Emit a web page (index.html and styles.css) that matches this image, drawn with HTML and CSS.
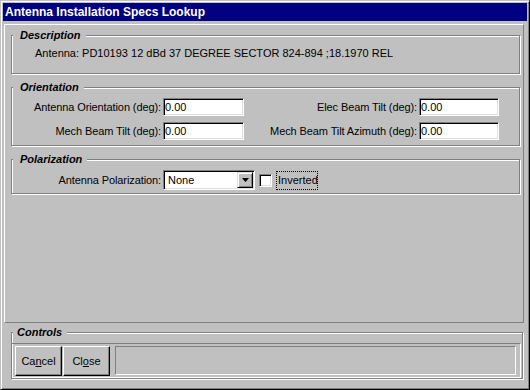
FILE: index.html
```html
<!DOCTYPE html>
<html lang="en">
	<head>
		<meta charset="UTF-8" />
		<title>Antenna Installation Specs Lookup</title>
		<link rel="stylesheet" href="styles.css">
	</head>
	<body>
		<div class="window">
			<div class="titlebar">Antenna Installation Specs Lookup</div>
			<div class="client">
				<div class="main-panel">
					<fieldset class="group desc">
						<legend>Description</legend>
						<div class="desc-text">Antenna: PD10193 12 dBd 37 DEGREE SECTOR 824-894 ;18.1970 REL</div>
					</fieldset>

					<fieldset class="group orient">
						<legend>Orientation</legend>
						<div class="field-grid">
							<label for="orient">Antenna Orientation (deg):</label>
							<input class="field" type="text" id="orient" value="0.00" />
							<label for="elecTilt">Elec Beam Tilt (deg):</label>
							<input class="field" type="text" id="elecTilt" value="0.00" />
							<label for="mechTilt">Mech Beam Tilt (deg):</label>
							<input class="field" type="text" id="mechTilt" value="0.00" />
							<label for="mechAz">Mech Beam Tilt Azimuth (deg):</label>
							<input class="field" type="text" id="mechAz" value="0.00" />
						</div>
					</fieldset>

					<fieldset class="group polar">
						<legend>Polarization</legend>
						<div class="polar-row">
							<label class="row-label">Antenna Polarization:</label>
							<div class="combo">
								<span class="combo-text">None</span>
								<span class="combo-btn">
									<svg width="7" height="4" viewBox="0 0 7 4"><polygon points="0,0 7,0 3.5,4" fill="#000" /></svg>
								</span>
							</div>
							<span class="check"></span>
							<span class="check-label">Inverted</span>
						</div>
					</fieldset>
				</div>

				<fieldset class="group controls">
					<legend>Controls</legend>
					<div class="controls-inner">
						<button class="btn">Ca<u>n</u>cel</button>
						<button class="btn">Cl<u>o</u>se</button>
						<div class="status"></div>
					</div>
				</fieldset>
			</div>
		</div>
	</body>
</html>
```

FILE: styles.css
```css
body {
	margin: 0;
	background: #c0c0c0;
	font-family: "Liberation Sans", Arial, sans-serif;
	font-size: 11px;
	color: #000;
}
.window {
	width: 530px;
	height: 390px;
	box-sizing: border-box;
	background: #c0c0c0;
	border: 1px solid;
	border-color: #c0c0c0 #000 #000 #c0c0c0;
	box-shadow: inset 1px 1px #fff, inset -1px -1px #808080;
	padding: 2px;
	display: flex;
	flex-direction: column;
}
.titlebar {
	height: 18px;
	line-height: 18px;
	background: #000080;
	color: #fff;
	font-weight: bold;
	font-size: 12px;
	padding-left: 2px;
}
.client {
	flex: 1;
	display: flex;
	flex-direction: column;
}
.main-panel {
	height: 299px;
	box-sizing: border-box;
	margin: 3px 3px 0 1px;
	border: 1px solid;
	border-color: #fff #808080 #808080 #fff;
	display: flex;
	flex-direction: column;
}
.group {
	margin: 0 3px 0 6px;
	padding: 0;
	border: 1px solid #808080;
	box-shadow: inset 1px 1px #fff, 1px 1px #fff;
	min-width: 0;
}
.group legend {
	font-weight: bold;
	font-style: italic;
	line-height: 13px;
	margin-left: 1px;
	padding: 0 5px 0 7px;
	background: #c0c0c0;
}
.desc {
	margin-top: 4px;
	padding: 5px 0 13px;
}
.desc-text {
	line-height: 13px;
	padding-left: 23px;
}
.orient {
	margin-top: 7px;
	padding: 4px 0 5px;
}
.polar {
	margin-top: 7px;
	padding: 4px 0 3px;
}
.field-grid {
	display: grid;
	grid-template-columns: 151px 81px 175px 80px;
	row-gap: 6px;
	align-items: center;
}
.field-grid label,
.row-label {
	text-align: right;
	padding-right: 2px;
	letter-spacing: -0.1px;
}
.field {
	width: 100%;
	height: 18px;
	box-sizing: border-box;
	margin: 0;
	padding: 0 0 0 1px;
	border: 1px solid;
	border-color: #808080 #fff #fff #808080;
	box-shadow: inset 1px 1px #000, inset -1px -1px #dfdfdf;
	background: #fff;
	font: 11px "Liberation Sans", Arial, sans-serif;
	color: #000;
	outline: none;
}
.polar-row {
	display: flex;
	align-items: center;
}
.row-label {
	width: 151px;
	box-sizing: border-box;
}
.combo {
	width: 92px;
	height: 20px;
	box-sizing: border-box;
	padding: 1px;
	border: 1px solid;
	border-color: #808080 #fff #fff #808080;
	box-shadow: inset 1px 1px #000, inset -1px -1px #dfdfdf;
	background: #fff;
	display: flex;
	align-items: center;
}
.combo-text {
	flex: 1;
	padding-left: 3px;
}
.combo-btn {
	width: 16px;
	height: 16px;
	box-sizing: border-box;
	background: #c0c0c0;
	border: 1px solid;
	border-color: #dfdfdf #000 #000 #dfdfdf;
	box-shadow: inset 1px 1px #fff, inset -1px -1px #808080;
	display: flex;
	align-items: center;
	justify-content: center;
}
.combo-btn svg {
	display: block;
}
.check {
	width: 13px;
	height: 13px;
	box-sizing: border-box;
	margin-left: 4px;
	border: 1px solid;
	border-color: #808080 #fff #fff #808080;
	box-shadow: inset 1px 1px #000, inset -1px -1px #dfdfdf;
	background: #fff;
}
.check-label {
	margin-left: 4px;
	width: 42px;
	height: 19px;
	box-sizing: border-box;
	border: 1px dotted #000;
	padding-left: 1px;
	line-height: 17px;
}
.controls {
	margin: 3px 4px 0 8px;
	padding: 4px 0 0;
}
.controls legend {
	padding: 0 5px 0 4px;
}
.controls-inner {
	display: flex;
	align-items: flex-start;
	margin-right: 1px;
	padding: 2px 4px 1px 3px;
	border-top: 1px solid #808080;
	border-right: 1px solid #fff;
	border-bottom: 1px solid #fff;
}
.btn {
	width: 47px;
	height: 30px;
	box-sizing: border-box;
	margin: 0 1px 0 0;
	padding: 0;
	background: #c0c0c0;
	border: 1px solid;
	border-color: #fff #000 #000 #fff;
	box-shadow: inset -1px -1px #808080;
	font: 11px "Liberation Sans", Arial, sans-serif;
	color: #000;
}
.status {
	flex: 1;
	height: 29px;
	box-sizing: border-box;
	margin-left: 4px;
	border: 1px solid;
	border-color: #808080 #fff #fff #808080;
}
```
